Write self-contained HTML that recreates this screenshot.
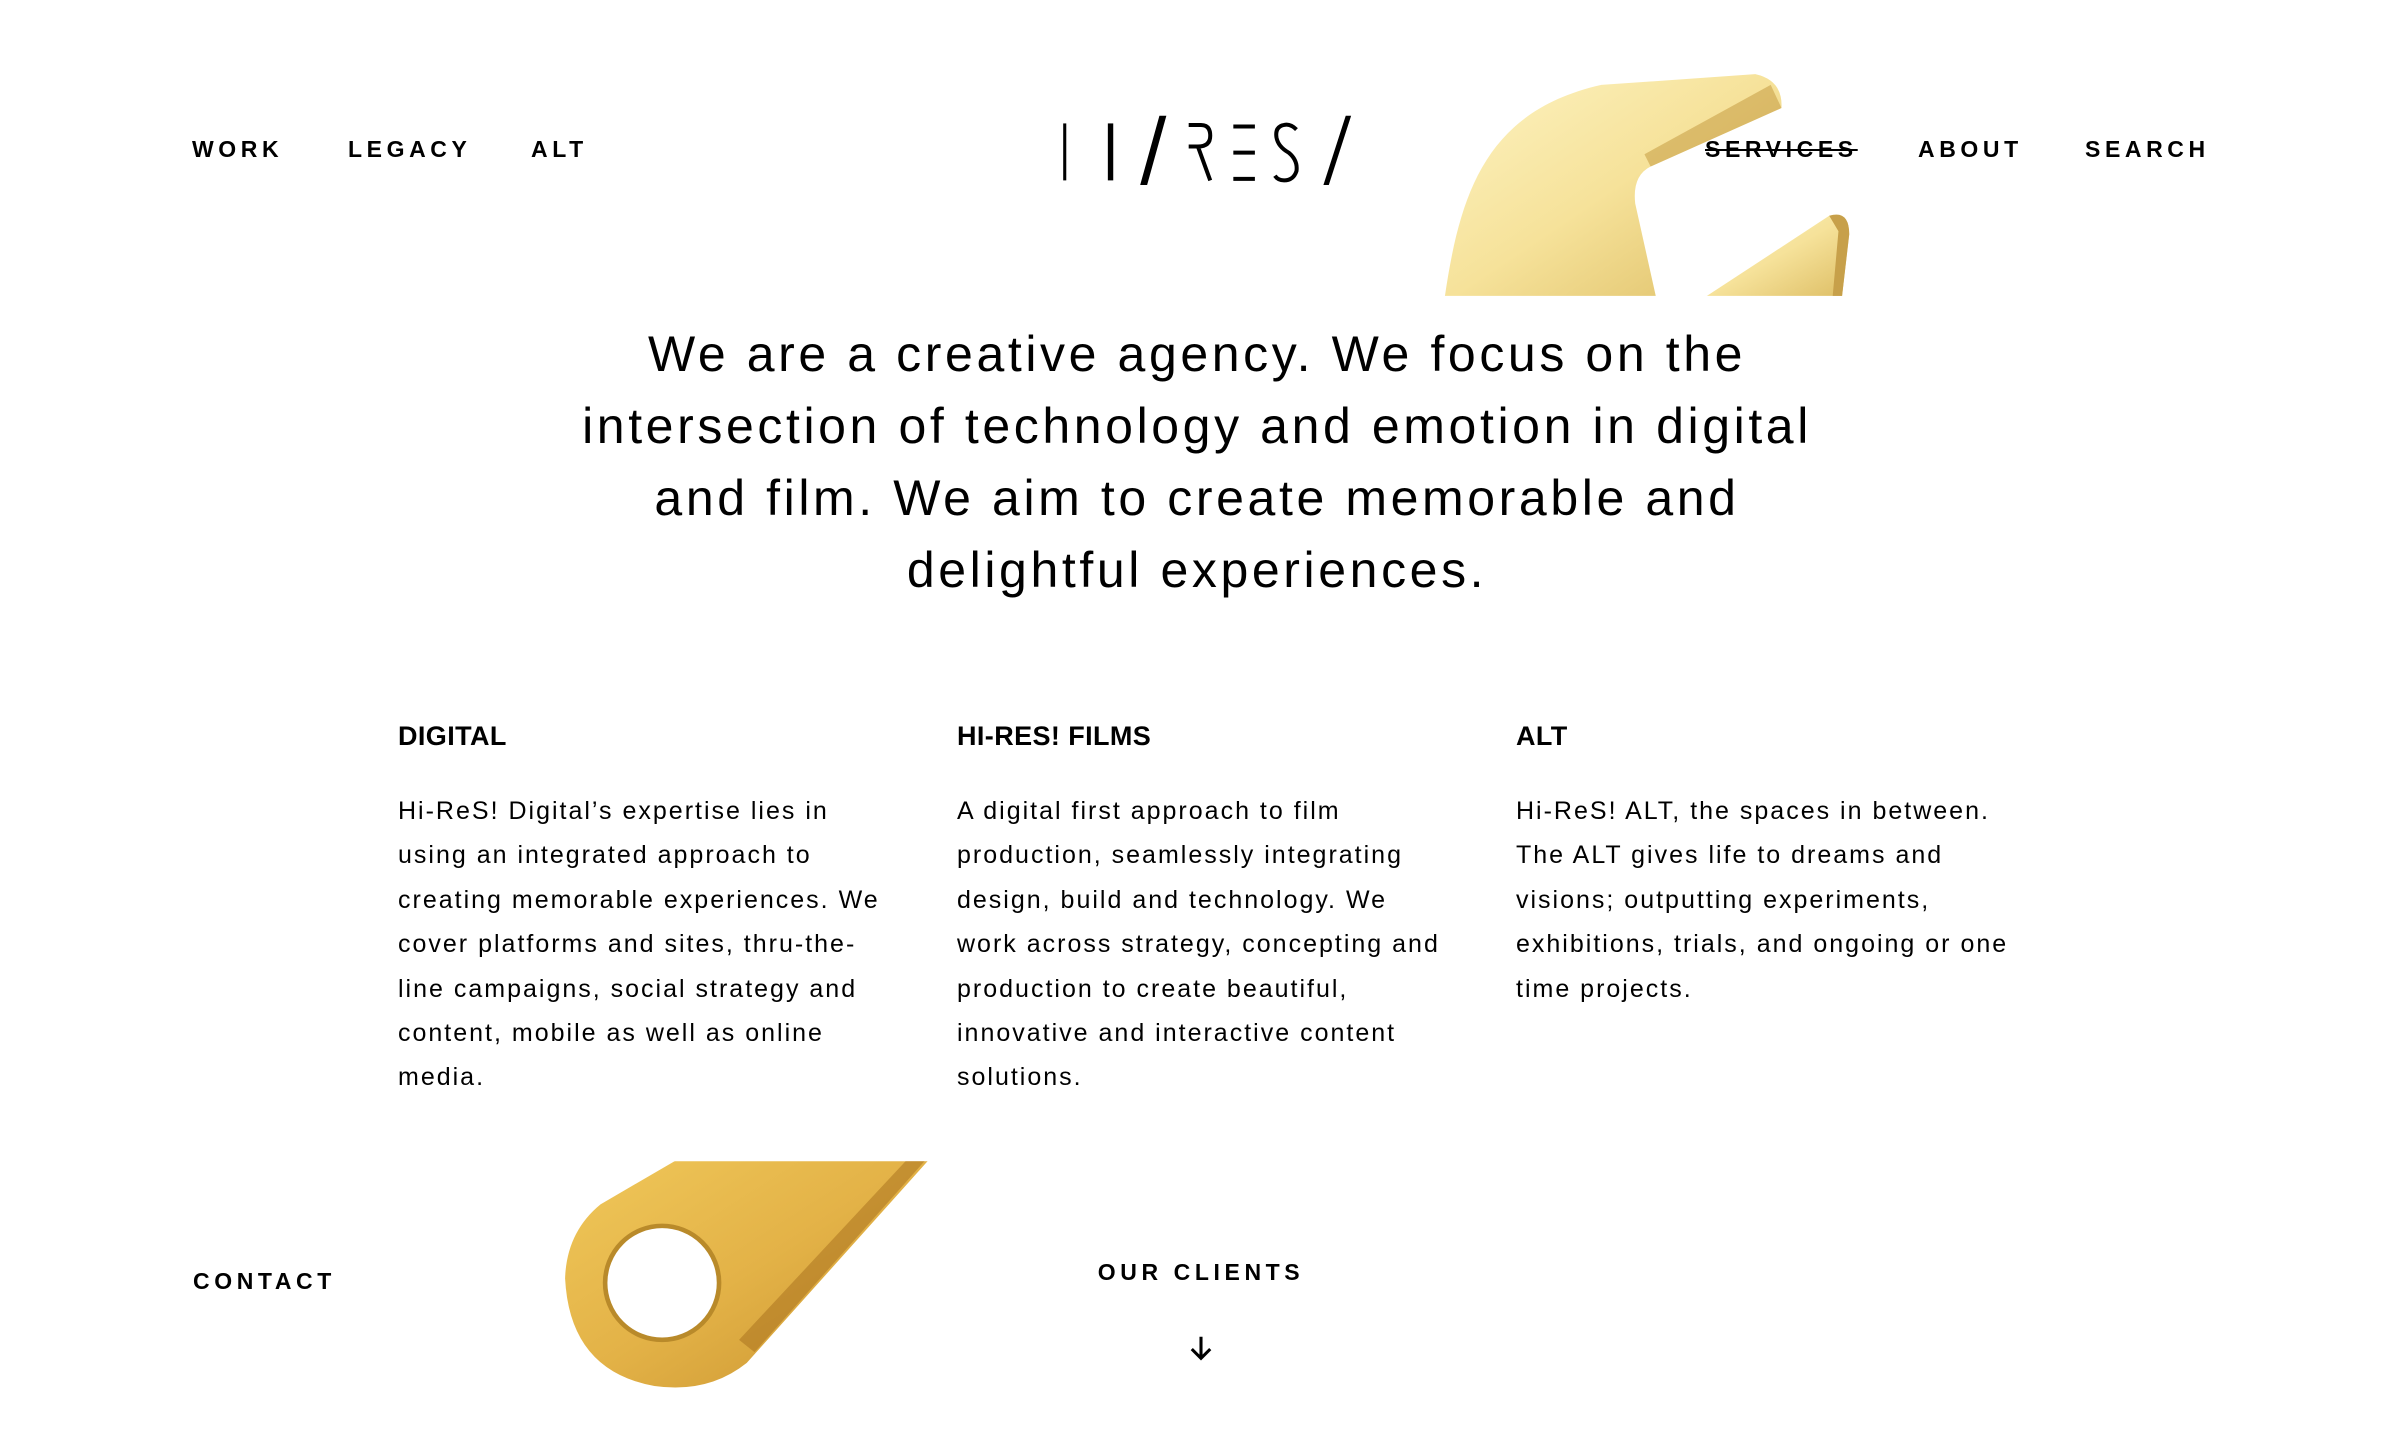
<!DOCTYPE html>
<html><head><meta charset="utf-8"><style>
html,body{margin:0;padding:0;background:#fff;width:2402px;height:1454px;overflow:hidden;position:relative;font-family:"Liberation Sans",sans-serif;color:#000}
.a{position:absolute;white-space:nowrap}
.nav{font-weight:bold;font-size:23px;line-height:23px;letter-spacing:4.6px;top:138px}
.h{top:318px;left:-4px;width:2402px;text-align:center;font-size:50px;line-height:72px;letter-spacing:3.6px}
.ch{font-weight:bold;font-size:27px;line-height:30px;top:721px;letter-spacing:0.4px}
.cb{font-size:25px;line-height:44.4px;top:789px;letter-spacing:2px}
svg{position:absolute;left:0;top:0}
</style></head><body>
<svg width="2402" height="1454" viewBox="0 0 1560 944">
<defs>
<linearGradient id="g1" x1="0" y1="0" x2="1" y2="1"><stop offset="0" stop-color="#fdf3c2"/><stop offset="0.5" stop-color="#f6e29a"/><stop offset="1" stop-color="#dcbc62"/></linearGradient>
<linearGradient id="g2" x1="0" y1="0" x2="1" y2="1"><stop offset="0" stop-color="#f0c85a"/><stop offset="0.5" stop-color="#e3b247"/><stop offset="1" stop-color="#c8922e"/></linearGradient>
<clipPath id="ct"><rect x="0" y="0" width="1560" height="192"/></clipPath>
<clipPath id="cb"><rect x="0" y="754" width="1560" height="200"/></clipPath>
</defs>
<g clip-path="url(#ct)">
<path d="M938,195 C948,125 965,72 1040,55 L1140,48 Q1158,52 1157,70 L1072,108 Q1060,114 1062,132 L1076,195 Z" fill="url(#g1)"/>
<path d="M1150,55 L1157,70 L1072,108 L1068,100 Z" fill="#c9a24a" opacity="0.6"/>
<path d="M1104,195 L1188,140 Q1201,136 1201,152 L1196,195 Z" fill="url(#g1)"/>
<path d="M1188,140 Q1201,136 1201,152 L1196,195 L1190,195 L1194,150 Z" fill="#c7a04a"/>
</g>
<g clip-path="url(#cb)">
<path d="M445,750 L606,750 L485,885 Q460,905 425,900 Q370,890 367,830 Q368,800 390,782 Z" fill="url(#g2)"/>
<path d="M470,750 L604,750 L490,878 L480,870 L590,752 Z" fill="#a66d1c" opacity="0.5"/>
<circle cx="430" cy="833" r="37" fill="#fff"/>
<circle cx="430" cy="833" r="37" fill="none" stroke="#b98a2a" stroke-width="3"/>
</g>
<g fill="#000">
<rect x="690.5" y="80" width="2" height="37"/>
<rect x="719.5" y="80" width="3.5" height="37"/>
<path d="M753,75 L757.5,75 L745,120 L740.5,120 Z"/>
<path d="M874,75 L877.5,75 L863,120 L859.5,120 Z"/>
</g>
<g fill="none" stroke="#000" stroke-width="2.6">
<path d="M772,81 L780,81 Q786,81 786,88 Q786,95 778,95 L772,95 M778,95 L786,117"/>
<path d="M801,82 L815,82 M801,99 L815,99 M801,116 L815,116"/>
<path d="M842,84 Q838,80 834,81 Q828,82 829,89 Q830,95 837,99 Q843,104 842,111 Q840,117 834,117 Q830,117 828,114"/>
</g>
<path d="M784,872 L784,886 M778,880 L784,886 L790,880" fill="none" stroke="#000" stroke-width="2" transform="translate(-4,-4)"/>
</svg>
<div class="a nav" style="left:192px">WORK</div>
<div class="a nav" style="left:348px">LEGACY</div>
<div class="a nav" style="left:531px">ALT</div>
<div class="a nav" style="left:1705px;text-decoration:line-through;text-decoration-thickness:2px">SERVICES</div>
<div class="a nav" style="left:1918px">ABOUT</div>
<div class="a nav" style="left:2085px">SEARCH</div>
<div class="a h">We are a creative agency. We focus on the<br>intersection of technology and emotion in digital<br>and film. We aim to create memorable and<br>delightful experiences.</div>
<div class="a ch" style="left:398px">DIGITAL</div>
<div class="a ch" style="left:957px">HI-RES! FILMS</div>
<div class="a ch" style="left:1516px">ALT</div>
<div class="a cb" style="left:398px">Hi-ReS! Digital’s expertise lies in<br>using an integrated approach to<br>creating memorable experiences. We<br>cover platforms and sites, thru-the-<br>line campaigns, social strategy and<br>content, mobile as well as online<br>media.</div>
<div class="a cb" style="left:957px">A digital first approach to film<br>production, seamlessly integrating<br>design, build and technology. We<br>work across strategy, concepting and<br>production to create beautiful,<br>innovative and interactive content<br>solutions.</div>
<div class="a cb" style="left:1516px">Hi-ReS! ALT, the spaces in between.<br>The ALT gives life to dreams and<br>visions; outputting experiments,<br>exhibitions, trials, and ongoing or one<br>time projects.</div>
<div class="a nav" style="left:193px;top:1270px">CONTACT</div>
<div class="a nav" style="left:991px;width:420px;text-align:center;top:1261px">OUR CLIENTS</div>
</body></html>
